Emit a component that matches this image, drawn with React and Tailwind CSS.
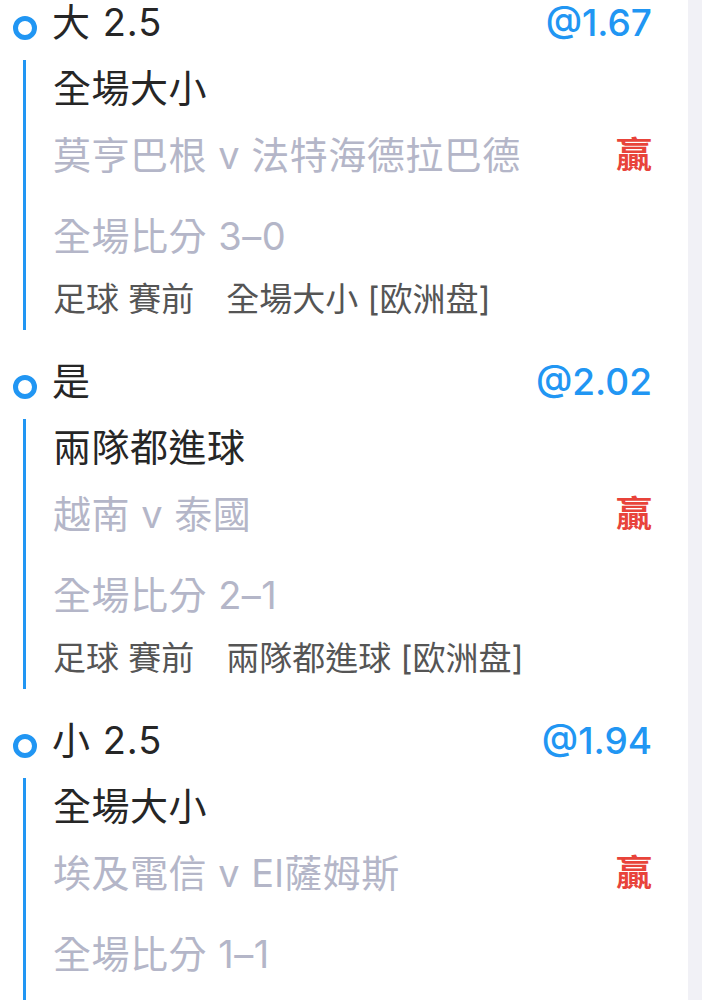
import React from 'react';

const bets = [
  {
    pick: '大 2.5',
    odds: '@1.67',
    market: '全場大小',
    match: '莫亨巴根 v 法特海德拉巴德',
    score: '全場比分 3–0',
    info: ['足球 賽前', '全場大小 [欧洲盘]'],
  },
  {
    pick: '是',
    odds: '@2.02',
    market: '兩隊都進球',
    match: '越南 v 泰國',
    score: '全場比分 2–1',
    info: ['足球 賽前', '兩隊都進球 [欧洲盘]'],
  },
  {
    pick: '小 2.5',
    odds: '@1.94',
    market: '全場大小',
    match: '埃及電信 v El薩姆斯',
    score: '全場比分 1–1',
    // the info line of this one sits below the fold
    info: null,
  },
];

const font = { fontFamily: 'Inter, "Noto Sans CJK TC", sans-serif' };

const BetItem = ({ bet, first }) => (
  <section className={first ? '' : 'mt-[29px]'}>
    {/* title row with ring marker */}
    <div className="flex items-center h-[44px]">
      <span className="ml-[13px] mt-[12px] w-[24px] h-[24px] rounded-full border-[5px] border-[#2196f3] shrink-0" />
      <span className="ml-[15px] flex-1 text-[38px] tracking-[1px] leading-none text-[#262626]">{bet.pick}</span>
      <span className="text-[37px] leading-none font-medium text-[#2196f3]">{bet.odds}</span>
    </div>

    <div className="ml-[23px] mt-[16px] border-l-[3px] border-[#2196f3] pl-[27px] pb-[8px]">
      <div className="h-[56px] flex items-center text-[38px] tracking-[0.5px] text-[#262626]">{bet.market}</div>
      <div className="h-[78px] flex items-center justify-between">
        <span className="text-[38px] tracking-[0.5px] text-[#b4b6c8]">{bet.match}</span>
        <span className="text-[36px] font-bold text-[#e8433a]">贏</span>
      </div>
      <div className="h-[84px] flex items-center text-[38px] tracking-[0.5px] text-[#b4b6c8]">{bet.score}</div>
      {bet.info && (
        <div className="h-[44px] flex items-center gap-[32px] text-[33px] text-[#555555]">
          <span>{bet.info[0]}</span>
          <span>{bet.info[1]}</span>
        </div>
      )}
    </div>
  </section>
);

export default function App() {
  return (
    <div className="flex h-[1000px] w-[702px] overflow-hidden bg-white" style={font}>
      <div className="w-[688px] pr-[36px]">
        {bets.map((bet, i) => (
          <BetItem key={i} bet={bet} first={i === 0} />
        ))}
      </div>
      <div className="flex-1 bg-[#f1f1f6]" />
    </div>
  );
}
